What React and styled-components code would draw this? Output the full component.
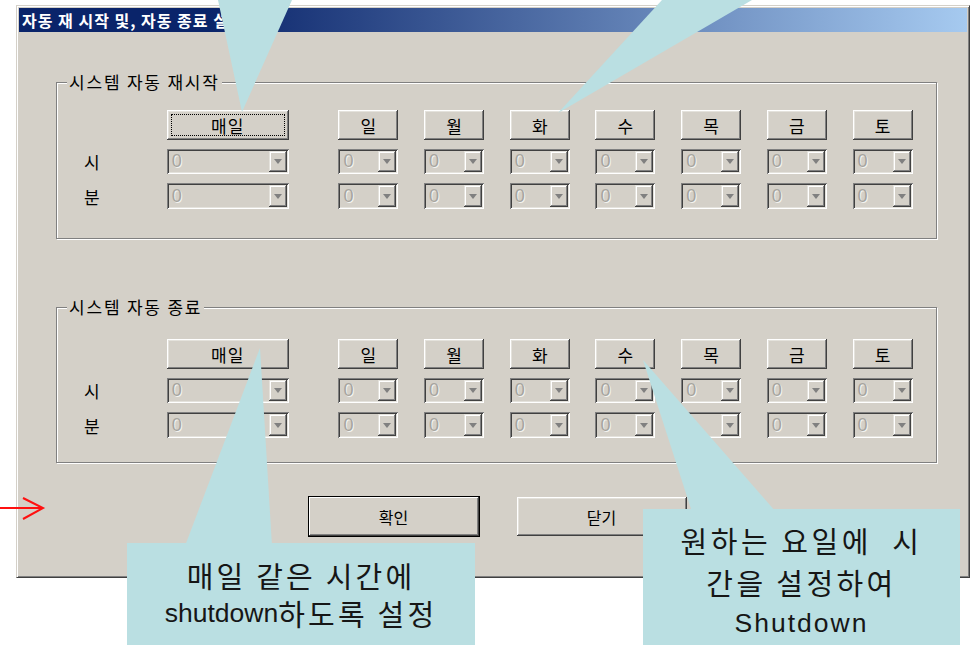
import React from "react";
import styled, { createGlobalStyle } from "styled-components";

const days = ["일", "월", "화", "수", "목", "금", "토"];

const GlobalStyle = createGlobalStyle`
  html, body {
    margin: 0;
    padding: 0;
    background: #fff;
    overflow: hidden;
  }
  body {
    font-family: "Noto Sans CJK KR", "Liberation Sans", sans-serif;
  }
`;

const Page = styled.div`
  position: relative;
  width: 973px;
  height: 645px;
  overflow: hidden;
  padding-top: 5px;
  box-sizing: border-box;
`;

const Window = styled.div`
  margin-left: 16px;
  width: 954px;
  height: 573px;
  box-sizing: border-box;
  background: #d4d0c8;
  border: 1px solid;
  border-color: #d4d0c8 #404040 #404040 #d4d0c8;
  box-shadow: inset 1px 1px #fff, inset -1px -1px #808080;
  padding: 2px;
  display: flex;
  flex-direction: column;
`;

const TitleBar = styled.div`
  height: 24px;
  flex-shrink: 0;
  display: flex;
  align-items: center;
  padding-left: 3px;
  background: linear-gradient(to right, #0a246a 0%, #0a246a 20%, #a6caf0 100%);
  color: #fff;
  font-weight: 700;
  font-size: 16px;
  letter-spacing: 1px;
`;

const Client = styled.div`
  flex: 1;
  display: flex;
  flex-direction: column;
  padding: 0 30px 0 37px;
`;

const Group = styled.fieldset`
  margin: ${(p) => p.$mt}px 0 0;
  padding: ${(p) => p.$pt}px 0 ${(p) => p.$pb}px 0;
  border: 1px solid #808080;
  box-shadow: 1px 1px 0 #fff, inset 1px 1px 0 #fff;
  min-width: 0;
`;

const Legend = styled.legend`
  margin-left: 10px;
  padding: 0 2px;
  background: #d4d0c8;
  font-size: 17px;
  line-height: 20px;
  letter-spacing: 1.8px;
  color: #000;
`;

const Grid = styled.div`
  display: grid;
  grid-template-columns: 84px 146px repeat(7, 60px);
  grid-template-rows: 30px 25px 26px;
  column-gap: 25.7px;
  row-gap: 9px;
`;

const RowLabel = styled.div`
  display: flex;
  align-items: center;
  padding-left: 27px;
  font-size: 17px;
  color: #000;
`;

const Button = styled.button`
  width: ${(p) => (p.$wide ? "122px" : "100%")};
  height: 100%;
  margin: 0;
  padding: 0;
  border: none;
  background: #d4d0c8;
  font-family: "Noto Sans CJK KR", "Liberation Sans", sans-serif;
  font-size: 17px;
  letter-spacing: ${(p) => (p.$wide ? 1 : 0)}px;
  color: #000;
  box-shadow: inset -1px -1px #404040, inset 1px 1px #fff,
    inset -2px -2px #808080, inset 2px 2px #e4e2dc;
  outline: ${(p) => (p.$focus ? "1px dotted #000" : "none")};
  outline-offset: -5px;
`;

const Combo = styled.div`
  width: ${(p) => (p.$wide ? "122px" : "100%")};
  height: 100%;
  box-sizing: border-box;
  display: flex;
  align-items: center;
  justify-content: space-between;
  padding: 2px 2px 2px 5px;
  background: #d4d0c8;
  box-shadow: inset 1px 1px #808080, inset -1px -1px #fff,
    inset 2px 2px #404040, inset -2px -2px #e4e2dc;
`;

const ComboValue = styled.span`
  font-family: "Liberation Sans", sans-serif;
  font-size: 18px;
  color: #a6a49e;
  text-shadow: 1px 1px 0 #f4f4f0;
`;

const DropButton = styled.span`
  width: 18px;
  height: 100%;
  display: flex;
  align-items: center;
  justify-content: center;
  background: #d4d0c8;
  box-shadow: inset -1px -1px #404040, inset 1px 1px #e4e2dc,
    inset -2px -2px #808080, inset 2px 2px #fff;
`;

const Arrow = styled.span`
  width: 0;
  height: 0;
  border-left: 4.5px solid transparent;
  border-right: 4.5px solid transparent;
  border-top: 5px solid #808080;
`;

const Actions = styled.div`
  display: flex;
  gap: 36px;
  justify-content: center;
  padding-left: 2px;
  margin-top: 33px;
`;

const ActionButton = styled.button`
  width: 172px;
  height: 41px;
  margin: 0;
  padding: 0;
  background: #d4d0c8;
  font-family: "Noto Sans CJK KR", "Liberation Sans", sans-serif;
  font-size: 16px;
  color: #000;
  border: 1px solid ${(p) => (p.$default ? "#000" : "transparent")};
  box-shadow: ${(p) =>
    p.$default
      ? "inset -1px -1px #404040, inset 1px 1px #fff, inset -2px -2px #808080"
      : "inset -1px -1px #404040, inset 1px 1px #fff, inset -2px -2px #808080, inset 2px 2px #e4e2dc"};
`;

const Overlay = styled.svg`
  position: absolute;
  left: 0;
  top: 0;
  pointer-events: none;
`;

const CalloutBox = styled.div`
  position: absolute;
  left: ${(p) => p.$left}px;
  top: ${(p) => p.$top}px;
  width: ${(p) => p.$width}px;
  height: ${(p) => p.$height}px;
  box-sizing: border-box;
  padding-top: ${(p) => p.$pad}px;
  background: #badfe2;
  color: #161616;
`;

const CalloutLine = styled.div`
  height: ${(p) => p.$line}px;
  line-height: ${(p) => p.$line}px;
  display: flex;
  justify-content: center;
  align-items: center;
  white-space: pre;
`;

const Ko = styled.span`
  font-family: "Noto Sans CJK KR", sans-serif;
  font-size: 29px;
  letter-spacing: ${(p) => p.$ls || 3.2}px;
  line-height: 1;
`;

const Latin = styled.span`
  font-family: "Liberation Sans", sans-serif;
  font-size: 26.5px;
  letter-spacing: ${(p) => p.$ls || 0}px;
  line-height: 1;
`;

function DayGroup({ title, focus, mt, pt, pb }) {
  return (
    <Group $mt={mt} $pt={pt} $pb={pb}>
      <Legend>{title}</Legend>
      <Grid>
        <span />
        <Button $wide $focus={focus}>매일</Button>
        {days.map((d) => (
          <Button key={d}>{d}</Button>
        ))}
        {["시", "분"].map((label) => (
          <React.Fragment key={label}>
            <RowLabel>{label}</RowLabel>
            <Combo $wide>
              <ComboValue>0</ComboValue>
              <DropButton>
                <Arrow />
              </DropButton>
            </Combo>
            {days.map((d) => (
              <Combo key={d}>
                <ComboValue>0</ComboValue>
                <DropButton>
                  <Arrow />
                </DropButton>
              </Combo>
            ))}
          </React.Fragment>
        ))}
      </Grid>
    </Group>
  );
}

export default function App() {
  return (
    <Page>
      <GlobalStyle />
      <Window>
        <TitleBar>자동 재 시작 및, 자동 종료 설정</TitleBar>
        <Client>
          <DayGroup title="시스템 자동 재시작" focus mt={40} pt={18} pb={29} />
          <DayGroup title="시스템 자동 종료" mt={58} pt={22} pb={24} />
          <Actions>
            <ActionButton $default>확인</ActionButton>
            <ActionButton>닫기</ActionButton>
          </Actions>
        </Client>
      </Window>

      <Overlay width="973" height="645" viewBox="0 0 973 645">
        <polygon points="218,0 292,0 242,112" fill="#badfe2" />
        <polygon points="662,0 752,0 558,113" fill="#badfe2" />
        <polygon points="185,546 272,546 260,348" fill="#badfe2" />
        <polygon points="692,512 776,512 643,360" fill="#badfe2" />
        <line x1="0" y1="508" x2="42" y2="508" stroke="#ff1010" strokeWidth="2" />
        <polyline points="23,498 43,508 23,519" fill="none" stroke="#ff1010" strokeWidth="2" />
      </Overlay>

      <CalloutBox $left={127} $top={543} $width={348} $height={110} $pad={13}>
        <CalloutLine $line={38}>
          <Ko>매일 같은 시간에</Ko>
        </CalloutLine>
        <CalloutLine $line={38}>
          <Latin>shutdown</Latin>
          <Ko>하도록 설정</Ko>
        </CalloutLine>
      </CalloutBox>

      <CalloutBox $left={643} $top={509} $width={317} $height={140} $pad={10}>
        <CalloutLine $line={42}>
          <Ko $ls={3.6}>원하는 요일에  시</Ko>
        </CalloutLine>
        <CalloutLine $line={42}>
          <Ko $ls={3.4}>간을 설정하여</Ko>
        </CalloutLine>
        <CalloutLine $line={40}>
          <Latin $ls={2}>Shutdown</Latin>
        </CalloutLine>
      </CalloutBox>
    </Page>
  );
}
